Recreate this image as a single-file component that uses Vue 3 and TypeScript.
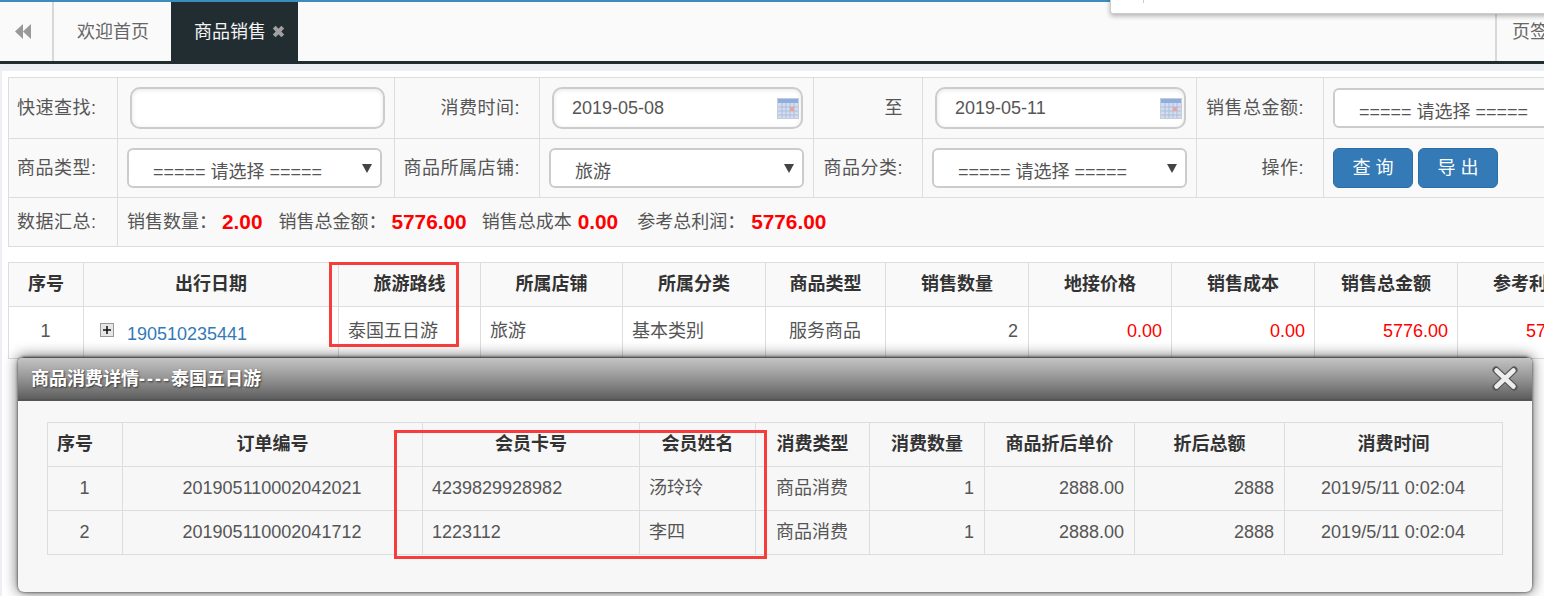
<script setup lang="ts">
/**
 * 商品销售页面 + 商品消费详情弹窗
 */
interface Column {
  title: string
  width: number
  align?: 'left' | 'center' | 'right'
  red?: boolean
}

const saleColumns: Column[] = [
  { title: '序号', width: 75, align: 'center' },
  { title: '出行日期', width: 255, align: 'left' },
  { title: '旅游路线', width: 142, align: 'left' },
  { title: '所属店铺', width: 142, align: 'left' },
  { title: '所属分类', width: 143, align: 'left' },
  { title: '商品类型', width: 120, align: 'center' },
  { title: '销售数量', width: 143, align: 'right' },
  { title: '地接价格', width: 143, align: 'right', red: true },
  { title: '销售成本', width: 143, align: 'right', red: true },
  { title: '销售总金额', width: 143, align: 'right', red: true },
  { title: '参考利润', width: 143, align: 'right', red: true }
]

const saleRow = ['1', '', '泰国五日游', '旅游', '基本类别', '服务商品', '2', '0.00', '0.00', '5776.00', '5776.00']

const detailColumns: Column[] = [
  { title: '序号', width: 75, align: 'center' },
  { title: '订单编号', width: 300, align: 'center' },
  { title: '会员卡号', width: 217, align: 'left' },
  { title: '会员姓名', width: 116, align: 'left' },
  { title: '消费类型', width: 114, align: 'center' },
  { title: '消费数量', width: 115, align: 'right' },
  { title: '商品折后单价', width: 150, align: 'right' },
  { title: '折后总额', width: 150, align: 'right' },
  { title: '消费时间', width: 218, align: 'center' }
]

const detailRows = [
  ['1', '201905110002042021', '4239829928982', '汤玲玲', '商品消费', '1', '2888.00', '2888', '2019/5/11 0:02:04'],
  ['2', '201905110002041712', '1223112', '李四', '商品消费', '1', '2888.00', '2888', '2019/5/11 0:02:04']
]

// gap: 标签与数值的间距, after: 数值之后的间距
const summary = [
  { label: '销售数量：', value: '2.00', gap: 5, after: 16 },
  { label: '销售总金额：', value: '5776.00', gap: 5, after: 15 },
  { label: '销售总成本', value: '0.00', gap: 6, after: 19 },
  { label: '参考总利润：', value: '5776.00', gap: 6, after: 0 }
]
</script>

<template>
  <div class="page">
    <!-- 顶部页签 -->
    <header class="tabbar">
      <button class="collapse" type="button">
        <svg width="18" height="15" viewBox="0 0 18 15"><path d="M9 0v15L1 7.500zM17 0v15L9 7.500z" fill="#999" /></svg>
      </button>
      <a class="tab">欢迎首页</a>
      <a class="tab active">
        商品销售
        <svg class="tab-close" width="13" height="13" viewBox="0 0 13 13"><path d="M2.200 2.200l8.600 8.600M10.800 2.200l-8.600 8.600" stroke="#a0a0a0" stroke-width="4" /></svg>
      </a>
      <a class="tab-more">页签操作</a>
    </header>

    <main class="content">
      <!-- 查询条件 -->
      <table class="form-table">
        <colgroup>
          <col style="width: 109px" /><col style="width: 277px" /><col style="width: 145px" /><col style="width: 274px" />
          <col style="width: 109px" /><col style="width: 274px" /><col style="width: 127px" /><col style="width: 260px" />
        </colgroup>
        <tbody>
          <tr class="row-a">
            <td class="label first">快速查找:</td>
            <td><input class="field wide" type="text" /></td>
            <td class="label">消费时间:</td>
            <td>
              <div class="date">
                <input class="field" type="text" value="2019-05-08" readonly />
                <svg class="cal" width="22" height="21" viewBox="0 0 22 21">
                  <rect x="0.500" y="0.500" width="21" height="20" fill="#d3ddef" stroke="#c3cddc" />
                  <rect x="1" y="1" width="20" height="4" fill="#8fadde" />
                  <path d="M1 9h20M1 13h20M1 17h20M5 5v15M9 5v15M13 5v15M17 5v15" stroke="#adbdda" />
                  <rect x="13" y="9" width="4" height="4" fill="#e8a598" />
                </svg>
              </div>
            </td>
            <td class="label">至</td>
            <td>
              <div class="date">
                <input class="field" type="text" value="2019-05-11" readonly />
                <svg class="cal" width="22" height="21" viewBox="0 0 22 21">
                  <rect x="0.500" y="0.500" width="21" height="20" fill="#d3ddef" stroke="#c3cddc" />
                  <rect x="1" y="1" width="20" height="4" fill="#8fadde" />
                  <path d="M1 9h20M1 13h20M1 17h20M5 5v15M9 5v15M13 5v15M17 5v15" stroke="#adbdda" />
                  <rect x="13" y="9" width="4" height="4" fill="#e8a598" />
                </svg>
              </div>
            </td>
            <td class="label">销售总金额:</td>
            <td><div class="select no-arrow">===== 请选择 =====</div></td>
          </tr>
          <tr class="row-b">
            <td class="label first">商品类型:</td>
            <td><div class="select">===== 请选择 =====<i class="caret"></i></div></td>
            <td class="label">商品所属店铺:</td>
            <td><div class="select">旅游<i class="caret"></i></div></td>
            <td class="label">商品分类:</td>
            <td><div class="select">===== 请选择 =====<i class="caret"></i></div></td>
            <td class="label">操作:</td>
            <td>
              <div class="actions">
                <button class="btn" type="button">查 询</button>
                <button class="btn" type="button">导 出</button>
              </div>
            </td>
          </tr>
          <tr class="row-c">
            <td class="label first">数据汇总:</td>
            <td colspan="7">
              <div class="summary">
                <span
                  v-for="item in summary"
                  :key="item.label"
                  class="sum-item"
                  :style="{ marginRight: item.after + 'px' }"
                >
                  {{ item.label }}<b :style="{ marginLeft: item.gap + 'px' }">{{ item.value }}</b>
                </span>
              </div>
            </td>
          </tr>
        </tbody>
      </table>

      <!-- 销售列表 -->
      <table class="grid sale-grid">
        <colgroup>
          <col v-for="c in saleColumns" :key="c.title" :style="{ width: c.width + 'px' }" />
        </colgroup>
        <thead>
          <tr>
            <th v-for="c in saleColumns" :key="c.title">{{ c.title }}</th>
          </tr>
        </thead>
        <tbody>
          <tr>
            <td
              v-for="(c, i) in saleColumns"
              :key="c.title"
              :class="[c.align, { red: c.red }]"
            >
              <template v-if="i === 1">
                <span class="expand">
                  <svg width="14" height="14" viewBox="0 0 14 14">
                    <rect x="0.500" y="0.500" width="13" height="13" fill="#e6e6e6" stroke="#999" />
                    <path d="M3 7h8M7 3v8" stroke="#111" stroke-width="1.500" />
                  </svg>
                </span>
                <a class="link">190510235441</a>
              </template>
              <template v-else>{{ saleRow[i] }}</template>
            </td>
          </tr>
        </tbody>
      </table>
    </main>

    <!-- 右上角下拉 -->
    <div class="top-popup"><i></i></div>

    <!-- 详情弹窗 -->
    <section class="dialog">
      <div class="dialog-head">
        <span>商品消费详情<span class="dashes">----</span>泰国五日游</span>
        <svg class="dialog-close" width="26" height="25" viewBox="0 0 26 25">
          <path d="M4 4l18 17M22 4L4 21" stroke="#555" stroke-width="7" stroke-linecap="round" />
          <path d="M4.500 4.500l17 16M21.500 4.500l-17 16" stroke="#ededed" stroke-width="4.500" stroke-linecap="round" />
        </svg>
      </div>
      <div class="dialog-body">
        <table class="grid detail-grid">
          <colgroup>
            <col v-for="c in detailColumns" :key="c.title" :style="{ width: c.width + 'px' }" />
          </colgroup>
          <thead>
            <tr>
              <th v-for="c in detailColumns" :key="c.title">{{ c.title }}</th>
            </tr>
          </thead>
          <tbody>
            <tr v-for="row in detailRows" :key="row[1]">
              <td v-for="(c, i) in detailColumns" :key="c.title" :class="c.align">{{ row[i] }}</td>
            </tr>
          </tbody>
        </table>
      </div>
    </section>

    <!-- 红色标注框 -->
    <div class="mark mark-a"></div>
    <div class="mark mark-b"></div>
  </div>
</template>

<style>
html,
body {
  margin: 0;
  background: #ecf0f5;
}
</style>

<style scoped>
.page {
  position: relative;
  width: 1544px;
  height: 596px;
  overflow: hidden;
  background: #ecf0f5;
  color: #555;
  font-family: "Liberation Sans", "Noto Sans CJK SC", sans-serif;
  font-size: 18px;
  line-height: 22px;
}

/* 顶部页签 */
.tabbar {
  display: flex;
  height: 59px;
  background: #fafafa;
  border-top: 2px solid #3c8dbc;
  border-bottom: 3px solid #222d32;
}

.collapse {
  display: flex;
  align-items: center;
  justify-content: center;
  width: 54px;
  padding: 0 6px 0 0;
  background: none;
  border: none;
  border-right: 2px solid #d8d8d8;
}

.tab {
  display: flex;
  align-items: center;
  height: 59px;
  padding: 0 22px 0 23px;
  color: #666;
  white-space: nowrap;
}

.tab.active {
  padding: 0 13px 0 23px;
  background: #222d32;
  color: #f4f4f4;
}

.tab-close {
  margin-left: 6px;
}

.tab-more {
  display: flex;
  align-items: center;
  margin-left: auto;
  width: 49px;
  padding-left: 15px;
  overflow: hidden;
  white-space: nowrap;
  color: #666;
  border-left: 2px solid #d8d8d8;
  box-sizing: border-box;
  height: 59px;
}

/* 内容区 */
.content {
  margin: 7px 0 0 2px;
  height: 525px;
  padding: 6px 0 0 6px;
  background: #fff;
  overflow: hidden;
}

table {
  border-collapse: collapse;
  table-layout: fixed;
}

.form-table {
  width: 1575px;
  background: #f9f9f9;
}

.form-table td {
  padding: 0 0 0 9px;
  border: 1px solid #ddd;
}

.row-a td {
  height: 60px;
}

.row-b td {
  height: 58px;
}

.row-c td {
  height: 48px;
}

.form-table .label {
  padding: 0 19px 1px 0;
  height: auto;
  text-align: right;
  white-space: nowrap;
  letter-spacing: 0.500px;
}

.form-table .label.first {
  padding: 0 0 1px 8px;
  text-align: left;
}

.field {
  display: block;
  box-sizing: border-box;
  width: 251px;
  height: 42px;
  margin-left: 3px;
  padding: 0 18px;
  background: #fff;
  border: 2px solid #ccc;
  border-radius: 10px;
  box-shadow: inset 0 1px 4px rgba(0, 0, 0, 0.1);
  color: #555;
  font: inherit;
  outline: none;
}

.field.wide {
  width: 255px;
}

.date {
  position: relative;
  width: 254px;
}

.cal {
  position: absolute;
  top: 11px;
  right: 4px;
}

.select {
  position: relative;
  box-sizing: border-box;
  width: 255px;
  height: 40px;
  padding: 9px 0 0 24px;
  line-height: 26px;
  background: #fff;
  border: 2px solid #ccc;
  border-radius: 6px;
  white-space: nowrap;
  overflow: hidden;
}

.select.no-arrow {
  width: 300px;
}

.caret {
  position: absolute;
  top: 14px;
  right: 8px;
  width: 0;
  height: 0;
  border-left: 5px solid transparent;
  border-right: 5px solid transparent;
  border-top: 9px solid #444;
}

.actions {
  display: flex;
  gap: 5px;
}

.btn {
  box-sizing: border-box;
  width: 80px;
  height: 40px;
  padding: 0;
  background: #337ab7;
  border: 1px solid #2e6da4;
  border-radius: 6px;
  color: #fff;
  font: inherit;
}

.summary {
  display: flex;
  align-items: center;
  white-space: nowrap;
}

.sum-item {
  display: inline-flex;
  align-items: center;
}

.sum-item b {
  color: #f00;
  font-size: 20.800px;
}

/* 数据表格 */
.grid th {
  height: 41px;
  padding: 0 0 2px;
  border: 1px solid #ddd;
  color: #333;
  font-weight: bold;
  text-align: center;
  white-space: nowrap;
}

.grid td {
  height: 41px;
  padding: 0 10px 2px 9px;
  border: 1px solid #ddd;
  white-space: nowrap;
  overflow: hidden;
}

.grid .center {
  text-align: center;
}

.grid .left {
  text-align: left;
}

.grid .right {
  text-align: right;
}

.grid .red {
  color: #f00;
  padding-right: 9px;
}

.sale-grid {
  width: 1592px;
  margin-top: 15px;
  background: #fff;
}

.sale-grid th {
  background: #f9f9f9;
  height: 42px;
  padding-bottom: 1px;
}

.sale-grid td {
  height: 47px;
  padding-bottom: 4px;
}

.expand {
  display: inline-block;
  margin: 0 13px 0 7px;
  vertical-align: -1px;
}

.link {
  position: relative;
  top: 4px;
  color: #337ab7;
}

.detail-grid {
  width: 1455px;
}

.detail-grid th:first-child {
  padding-right: 20px;
}

/* 右上角下拉 */
.top-popup {
  position: absolute;
  top: -4px;
  left: 1110px;
  width: 460px;
  height: 16px;
  background: #fff;
  border: 1px solid #ccc;
  border-radius: 3px;
  box-shadow: 0 2px 5px rgba(0, 0, 0, 0.3);
}

.top-popup i {
  position: absolute;
  top: 0;
  left: 32px;
  width: 1px;
  height: 6px;
  background: #ccc;
}

/* 详情弹窗 */
.dialog {
  position: absolute;
  top: 357px;
  left: 18px;
  box-sizing: border-box;
  width: 1514px;
  height: 235px;
  background: #f7f7f7;
  border-radius: 6px;
  box-shadow: 0 0 3px rgba(0, 0, 0, 0.7), 0 0 14px 1px rgba(0, 0, 0, 0.55);
  overflow: hidden;
}

.dialog-head {
  display: flex;
  align-items: center;
  justify-content: space-between;
  box-sizing: border-box;
  height: 44px;
  padding: 0 14px 0 13px;
  background: linear-gradient(#c4c4c4, #8f8f8f 55%, #5e5e5e);
  border-top: 1px solid #555;
  border-bottom: 2px solid #555;
  color: #fff;
  font-weight: bold;
  text-shadow: 1px 1px 2px rgba(0, 0, 0, 0.6);
}

.dashes {
  letter-spacing: 2px;
}

.dialog-body {
  padding: 21px 30px 0 29px;
}

/* 红色标注框 */
.mark {
  position: absolute;
  box-sizing: border-box;
  border: 3px solid #f73c3c;
}

.mark-a {
  top: 262px;
  left: 329px;
  width: 130px;
  height: 85px;
}

.mark-b {
  top: 430px;
  left: 394px;
  width: 373px;
  height: 129px;
}
</style>
